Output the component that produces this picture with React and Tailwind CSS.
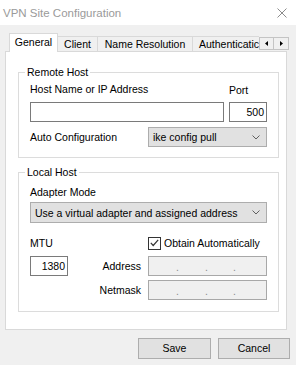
import React from "react"

function Chevron() {
  return (
    <svg width="8" height="5" viewBox="0 0 8 5" className="shrink-0">
      <polyline points="0.5,0.5 4,4 7.5,0.5" fill="none" stroke="#606060" strokeWidth="1" />
    </svg>
  )
}

function Select({ value, className }) {
  return (
    <div className={`flex items-center justify-between bg-[#e1e1e1] border border-[#adadad] pl-[4px] pr-[6px] ${className}`}>
      <span className="whitespace-nowrap">{value}</span>
      <Chevron />
    </div>
  )
}

function IpInput() {
  return (
    <div className="w-[119px] h-[20px] bg-[#f0f0f0] border border-[#a8a8a8] flex items-end pb-[3px] text-[#8a8a8a] leading-[10px]">
      <span className="w-[30px] text-right">.</span>
      <span className="w-[29px] text-right">.</span>
      <span className="w-[28px] text-right">.</span>
    </div>
  )
}

function Group({ title, className, children }) {
  return (
    <fieldset className={`ml-[12px] w-[261px] border border-[#dcdcdc] p-0 m-0 ${className}`}>
      <legend className="ml-[6px] px-[2px] leading-[14px]">{title}</legend>
      {children}
    </fieldset>
  )
}

export default function App() {
  return (
    <div className="w-[296px] h-[365px] bg-[#f0f0f0] text-black text-[10.5px] leading-[14px] font-['Liberation_Sans',Arial,sans-serif] overflow-hidden">
      {/* title bar */}
      <div className="h-[25px] bg-white flex items-center justify-between pl-[3px] pr-[9px]">
        <span className="text-[11.5px] text-[#9a9a9a]">VPN Site Configuration</span>
        <svg width="10" height="10" viewBox="0 0 10 10">
          <line x1="0.5" y1="0.5" x2="9.5" y2="9.5" stroke="#8c8c8c" strokeWidth="1" />
          <line x1="9.5" y1="0.5" x2="0.5" y2="9.5" stroke="#8c8c8c" strokeWidth="1" />
        </svg>
      </div>

      <div className="px-[5px] pt-[8px]">
        {/* tabs */}
        <div className="flex items-end h-[18px]">
          <div className="ml-[4px] w-[49px] h-[19px] mb-[-1px] relative z-10 bg-white border border-b-0 border-[#d9d9d9] pt-[1px] text-center">
            General
          </div>
          <div className="w-[40px] h-[15px] border-t border-r border-[#d9d9d9] text-center">Client</div>
          <div className="w-[95px] h-[15px] border-t border-r border-[#d9d9d9] text-center">Name Resolution</div>
          <div className="w-[66px] h-[15px] border-t border-[#d9d9d9] pl-[6px] overflow-hidden whitespace-nowrap">
            Authenticatic
          </div>
          <div className="self-start mt-[4px] flex">
            <div className="w-[15px] h-[13px] border border-[#c4c4c4] bg-[#f0f0f0] flex items-center justify-center">
              <svg width="3" height="5" viewBox="0 0 3 5"><polygon points="3,0 3,5 0,2.5" fill="#000" /></svg>
            </div>
            <div className="w-[15px] h-[13px] border border-l-0 border-[#c4c4c4] bg-[#f0f0f0] flex items-center justify-center">
              <svg width="3" height="5" viewBox="0 0 3 5"><polygon points="0,0 0,5 3,2.5" fill="#000" /></svg>
            </div>
          </div>
        </div>

        {/* panel */}
        <div className="w-[282px] h-[279px] bg-white border border-[#d9d9d9] flex flex-col">
          <Group title="Remote Host" className="mt-[13px]">
            <div className="px-[11px] pb-[10px]">
              <div className="flex gap-[5px] mt-[3px]">
                <div className="flex-1">Host Name or IP Address</div>
                <div className="w-[38px] pt-[1px]">Port</div>
              </div>
              <div className="flex gap-[5px] mt-[5px]">
                <div className="flex-1 h-[20px] border border-[#7a7a7a] bg-white" />
                <div className="w-[38px] h-[20px] border border-[#7a7a7a] bg-white text-right pr-[2px] leading-[18px]">500</div>
              </div>
              <div className="flex items-center justify-between mt-[5px]">
                <span>Auto Configuration</span>
                <Select value="ike config pull" className="w-[119px] h-[20px]" />
              </div>
            </div>
          </Group>

          <Group title="Local Host" className="mt-[7px]">
            <div className="px-[11px] pb-[11px]">
              <div className="mt-[6px]">Adapter Mode</div>
              <Select value="Use a virtual adapter and assigned address" className="mt-[3px] h-[21px]" />
              <div className="flex items-center justify-between mt-[13px]">
                <span>MTU</span>
                <label className="w-[119px] flex items-center gap-[3px]">
                  <span className="w-[13px] h-[13px] border border-[#333] bg-white flex items-center justify-center">
                    <svg width="9" height="8" viewBox="0 0 9 8">
                      <polyline points="0.8,3.8 3.2,6.5 8.2,0.8" fill="none" stroke="#333" strokeWidth="1.2" />
                    </svg>
                  </span>
                  <span>Obtain Automatically</span>
                </label>
              </div>
              <div className="flex items-center mt-[6px]">
                <div className="w-[38px] h-[20px] border border-[#7a7a7a] bg-white text-right pr-[2px] leading-[18px]">1380</div>
                <div className="flex-1 text-right pr-[7px]">Address</div>
                <IpInput />
              </div>
              <div className="flex items-center mt-[4px]">
                <div className="flex-1 text-right pr-[7px]">Netmask</div>
                <IpInput />
              </div>
            </div>
          </Group>
        </div>

        {/* buttons */}
        <div className="flex justify-end gap-[7px] mt-[8px] pr-[1px]">
          <button className="w-[73px] h-[21px] bg-[#e1e1e1] border border-[#adadad] leading-[19px]">Save</button>
          <button className="w-[72px] h-[21px] bg-[#e1e1e1] border border-[#adadad] leading-[19px]">Cancel</button>
        </div>
      </div>
    </div>
  )
}
